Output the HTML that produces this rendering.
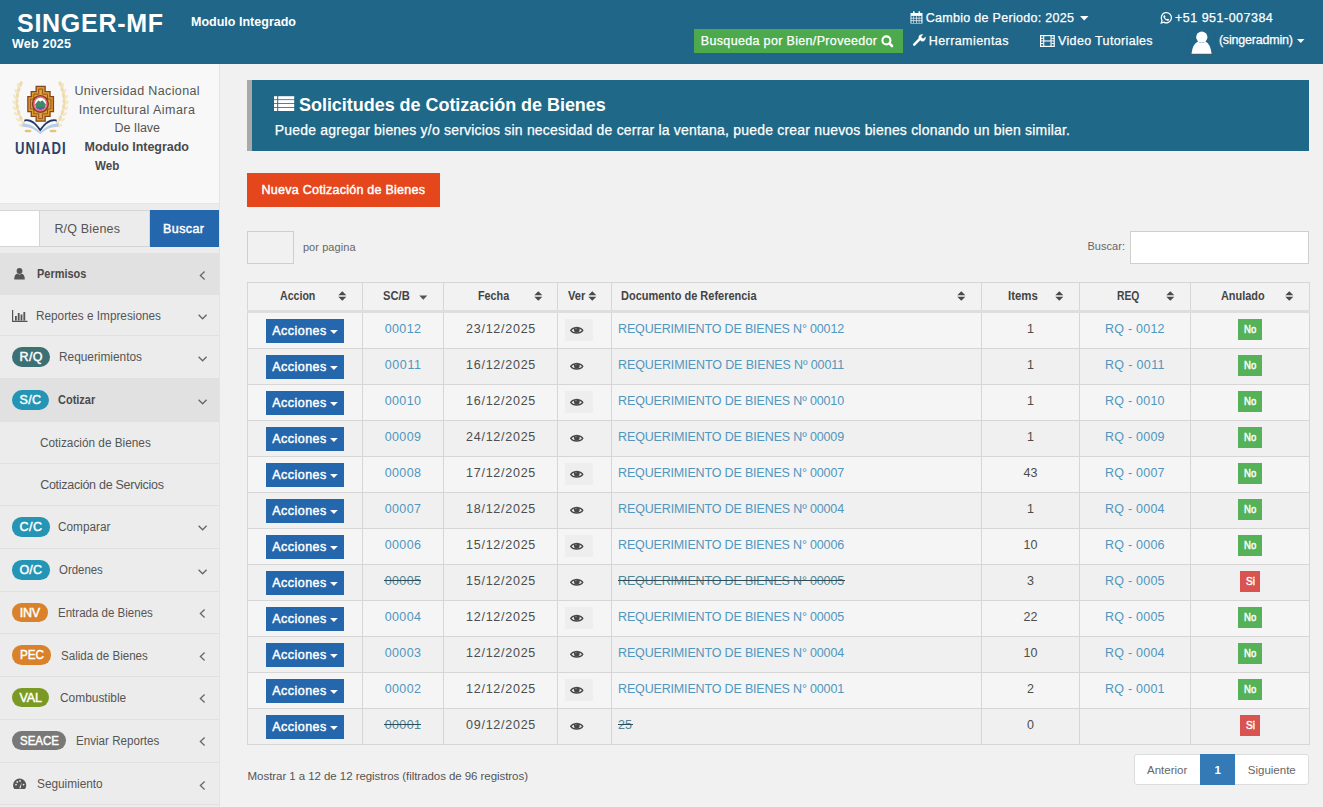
<!DOCTYPE html>
<html><head><meta charset="utf-8">
<style>
*{box-sizing:border-box;margin:0;padding:0}
html,body{width:1323px;height:807px;overflow:hidden;background:#f1f1f1}
body{font-family:"Liberation Sans",sans-serif;position:relative}
.a{position:absolute;white-space:nowrap}
.a.r{-webkit-text-stroke:0.25px currentColor}
svg{position:absolute;overflow:visible}
</style></head><body>
<div class="a" style="left:0px;top:0px;width:1323px;height:64px;background:#1f6688;"></div>
<div class="a" style="left:17.00px;top:10.85px;font-size:25px;line-height:25px;color:#fff;font-weight:bold;letter-spacing:0.719px;">SINGER-MF</div>
<div class="a" style="left:12.00px;top:37.58px;font-size:12.5px;line-height:12.5px;color:#fff;font-weight:bold;letter-spacing:0.221px;">Web 2025</div>
<div class="a" style="left:191.00px;top:15.98px;font-size:12.5px;line-height:12.5px;color:#fff;font-weight:bold;letter-spacing:0.010px;">Modulo Integrado</div>
<div class="a r" style="left:925.70px;top:11.58px;font-size:12.5px;line-height:12.5px;color:#fff;letter-spacing:0.298px;">Cambio de Periodo: 2025</div>
<svg style="left:1080px;top:16px" width="9" height="5" viewBox="0 0 9 5"><path d="M0 0H8.5L4.25 4.5Z" fill="#fff"/></svg>
<svg style="left:910px;top:11px" width="13" height="13" viewBox="0 0 13 13"><path d="M0.5 2h12v10.5H0.5Z" fill="#fff"/><rect x="3" y="0.3" width="1.6" height="3" fill="#fff"/><rect x="8.5" y="0.3" width="1.6" height="3" fill="#fff"/><rect x="1.4" y="4.9" width="2.1" height="1.9" fill="#1f6688"/><rect x="1.4" y="7.5" width="2.1" height="1.9" fill="#1f6688"/><rect x="1.4" y="10.1" width="2.1" height="1.9" fill="#1f6688"/><rect x="4.0" y="4.9" width="2.1" height="1.9" fill="#1f6688"/><rect x="4.0" y="7.5" width="2.1" height="1.9" fill="#1f6688"/><rect x="4.0" y="10.1" width="2.1" height="1.9" fill="#1f6688"/><rect x="6.7" y="4.9" width="2.1" height="1.9" fill="#1f6688"/><rect x="6.7" y="7.5" width="2.1" height="1.9" fill="#1f6688"/><rect x="6.7" y="10.1" width="2.1" height="1.9" fill="#1f6688"/><rect x="9.3" y="4.9" width="2.1" height="1.9" fill="#1f6688"/><rect x="9.3" y="7.5" width="2.1" height="1.9" fill="#1f6688"/><rect x="9.3" y="10.1" width="2.1" height="1.9" fill="#1f6688"/></svg>
<div class="a r" style="left:1175.00px;top:11.88px;font-size:12.5px;line-height:12.5px;color:#fff;letter-spacing:0.492px;">+51 951-007384</div>
<svg style="left:1160px;top:11.5px" width="12" height="12" viewBox="0 0 12 12"><path d="M1.3 10.9l0.7-2.5A5.1 5.1 0 1 1 3.7 10.1Z" fill="none" stroke="#fff" stroke-width="1.3"/><path d="M3.9 3.4c0.4-0.4 0.8-0.3 1 0.1l0.5 1.1c0.1 0.3-0.3 0.6-0.4 0.8 0.5 0.9 1.1 1.5 2 1.9 0.2-0.2 0.5-0.6 0.8-0.5l1.1 0.5c0.3 0.2 0.3 0.6 0 1-0.6 0.7-1.4 0.7-2.4 0.2-1.3-0.7-2.3-1.7-2.9-3-0.4-0.9-0.3-1.6 0.3-2.1Z" fill="#fff"/></svg>
<div class="a" style="left:694px;top:29px;width:209px;height:24px;background:#4caa4c;"></div>
<div class="a r" style="left:700.80px;top:34.98px;font-size:12.5px;line-height:12.5px;color:#fff;letter-spacing:0.337px;">Busqueda por Bien/Proveedor</div>
<svg style="left:881px;top:35px" width="13" height="13" viewBox="0 0 13 13"><circle cx="5.4" cy="5.4" r="4.0" fill="none" stroke="#fff" stroke-width="2.1"/><path d="M8.4 8.4L11 11" stroke="#fff" stroke-width="2.6" stroke-linecap="round"/></svg>
<svg style="left:912.5px;top:34px" width="13" height="13" viewBox="0 0 13 13"><path d="M1.2 10.6L6.6 5.2" stroke="#fff" stroke-width="2.6" stroke-linecap="round"/><path d="M5.6 4.6A3.6 3.6 0 0 1 10.3 0.4L8.4 2.3 8.8 4.1 10.6 4.5 12.5 2.6A3.6 3.6 0 0 1 8.3 7.3Z" fill="#fff"/></svg>
<div class="a r" style="left:928.70px;top:34.58px;font-size:12.5px;line-height:12.5px;color:#fff;letter-spacing:0.436px;">Herramientas</div>
<svg style="left:1039.5px;top:34.5px" width="15" height="12" viewBox="0 0 15 12"><rect x="0.6" y="0.6" width="13.6" height="10.8" fill="none" stroke="#fff" stroke-width="1.2"/><rect x="3.2" y="0.6" width="1.1" height="10.8" fill="#fff"/><rect x="10.5" y="0.6" width="1.1" height="10.8" fill="#fff"/><rect x="3.2" y="5.4" width="8.4" height="1.1" fill="#fff"/><rect x="0.6" y="2.8" width="2.6" height="1" fill="#fff"/><rect x="0.6" y="5.4" width="2.6" height="1" fill="#fff"/><rect x="0.6" y="8.0" width="2.6" height="1" fill="#fff"/><rect x="11.6" y="2.8" width="2.6" height="1" fill="#fff"/><rect x="11.6" y="5.4" width="2.6" height="1" fill="#fff"/><rect x="11.6" y="8.0" width="2.6" height="1" fill="#fff"/></svg>
<div class="a r" style="left:1058.00px;top:34.58px;font-size:12.5px;line-height:12.5px;color:#fff;letter-spacing:0.347px;">Video Tutoriales</div>
<div class="a" style="left:1186.5px;top:26.5px;width:29.0px;height:28.0px;background:#1f6688;border:1px solid #2f5f75;"></div>
<svg style="left:1187px;top:27px" width="28" height="27" viewBox="0 0 28 27"><circle cx="14.8" cy="10.2" r="5.6" fill="#fff"/><path d="M11 14.5 Q14.8 17.5 18.6 14.5 Q23.5 17 24.6 26.8 H4.5 Q5.5 17 11 14.5Z" fill="#fff"/></svg>
<div class="a r" style="left:1218.90px;top:33.77px;font-size:12.5px;line-height:12.5px;color:#fff;letter-spacing:-0.192px;">(singeradmin)</div>
<svg style="left:1296.5px;top:38.5px" width="8" height="5" viewBox="0 0 8 5"><path d="M0 0H7.5L3.75 4Z" fill="#fff"/></svg>
<div class="a" style="left:0px;top:64px;width:219px;height:743px;background:#ececec;"></div>
<div class="a" style="left:219px;top:64px;width:1px;height:743px;background:#e3e3e3;"></div>
<div class="a" style="left:0px;top:64px;width:219px;height:139px;background:#f8f8f8;"></div>
<div class="a" style="left:0px;top:203px;width:219px;height:1px;background:#e4e4e4;"></div>
<svg style="left:0;top:0" width="80" height="160" viewBox="0 0 80 160"><ellipse cx="20.69" cy="84.00" rx="1.6" ry="3.0" transform="rotate(25.0 20.69 84.00)" fill="#eedcad"/><ellipse cx="18.09" cy="85.50" rx="1.3" ry="2.6" transform="rotate(-15.0 18.09 85.50)" fill="#f4e7c6"/><ellipse cx="18.71" cy="89.71" rx="1.6" ry="3.0" transform="rotate(17.9 18.71 89.71)" fill="#eedcad"/><ellipse cx="16.11" cy="91.21" rx="1.3" ry="2.6" transform="rotate(-22.1 16.11 91.21)" fill="#f4e7c6"/><ellipse cx="17.39" cy="95.43" rx="1.6" ry="3.0" transform="rotate(10.7 17.39 95.43)" fill="#eedcad"/><ellipse cx="14.79" cy="96.93" rx="1.3" ry="2.6" transform="rotate(-29.3 14.79 96.93)" fill="#f4e7c6"/><ellipse cx="16.90" cy="101.14" rx="1.6" ry="3.0" transform="rotate(3.6 16.90 101.14)" fill="#eedcad"/><ellipse cx="14.30" cy="102.64" rx="1.3" ry="2.6" transform="rotate(-36.4 14.30 102.64)" fill="#f4e7c6"/><ellipse cx="17.33" cy="106.86" rx="1.6" ry="3.0" transform="rotate(-3.6 17.33 106.86)" fill="#eedcad"/><ellipse cx="14.73" cy="108.36" rx="1.3" ry="2.6" transform="rotate(-43.6 14.73 108.36)" fill="#f4e7c6"/><ellipse cx="18.68" cy="112.57" rx="1.6" ry="3.0" transform="rotate(-10.7 18.68 112.57)" fill="#eedcad"/><ellipse cx="16.08" cy="114.07" rx="1.3" ry="2.6" transform="rotate(-50.7 16.08 114.07)" fill="#f4e7c6"/><ellipse cx="20.85" cy="118.29" rx="1.6" ry="3.0" transform="rotate(-17.9 20.85 118.29)" fill="#eedcad"/><ellipse cx="18.25" cy="119.79" rx="1.3" ry="2.6" transform="rotate(-57.9 18.25 119.79)" fill="#f4e7c6"/><ellipse cx="23.69" cy="124.00" rx="1.6" ry="3.0" transform="rotate(-25.0 23.69 124.00)" fill="#eedcad"/><ellipse cx="21.09" cy="125.50" rx="1.3" ry="2.6" transform="rotate(-65.0 21.09 125.50)" fill="#f4e7c6"/><ellipse cx="60.31" cy="84.00" rx="1.6" ry="3.0" transform="rotate(-25.0 60.31 84.00)" fill="#eedcad"/><ellipse cx="62.91" cy="85.50" rx="1.3" ry="2.6" transform="rotate(15.0 62.91 85.50)" fill="#f4e7c6"/><ellipse cx="62.29" cy="89.71" rx="1.6" ry="3.0" transform="rotate(-17.9 62.29 89.71)" fill="#eedcad"/><ellipse cx="64.89" cy="91.21" rx="1.3" ry="2.6" transform="rotate(22.1 64.89 91.21)" fill="#f4e7c6"/><ellipse cx="63.61" cy="95.43" rx="1.6" ry="3.0" transform="rotate(-10.7 63.61 95.43)" fill="#eedcad"/><ellipse cx="66.21" cy="96.93" rx="1.3" ry="2.6" transform="rotate(29.3 66.21 96.93)" fill="#f4e7c6"/><ellipse cx="64.10" cy="101.14" rx="1.6" ry="3.0" transform="rotate(-3.6 64.10 101.14)" fill="#eedcad"/><ellipse cx="66.70" cy="102.64" rx="1.3" ry="2.6" transform="rotate(36.4 66.70 102.64)" fill="#f4e7c6"/><ellipse cx="63.67" cy="106.86" rx="1.6" ry="3.0" transform="rotate(3.6 63.67 106.86)" fill="#eedcad"/><ellipse cx="66.27" cy="108.36" rx="1.3" ry="2.6" transform="rotate(43.6 66.27 108.36)" fill="#f4e7c6"/><ellipse cx="62.32" cy="112.57" rx="1.6" ry="3.0" transform="rotate(10.7 62.32 112.57)" fill="#eedcad"/><ellipse cx="64.92" cy="114.07" rx="1.3" ry="2.6" transform="rotate(50.7 64.92 114.07)" fill="#f4e7c6"/><ellipse cx="60.15" cy="118.29" rx="1.6" ry="3.0" transform="rotate(17.9 60.15 118.29)" fill="#eedcad"/><ellipse cx="62.75" cy="119.79" rx="1.3" ry="2.6" transform="rotate(57.9 62.75 119.79)" fill="#f4e7c6"/><ellipse cx="57.31" cy="124.00" rx="1.6" ry="3.0" transform="rotate(25.0 57.31 124.00)" fill="#eedcad"/><ellipse cx="59.91" cy="125.50" rx="1.3" ry="2.6" transform="rotate(65.0 59.91 125.50)" fill="#f4e7c6"/><path d="M35.50 85.80 L45.80 85.80 L45.80 91.00 L50.70 91.00 L50.70 95.90 L54.10 95.90 L54.10 112.20 L50.70 112.20 L50.70 117.00 L45.80 117.00 L45.80 121.80 L35.50 121.80 L35.50 117.00 L30.60 117.00 L30.60 112.20 L27.20 112.20 L27.20 95.90 L30.60 95.90 L30.60 91.00 L35.50 91.00Z" fill="#86441e"/><path d="M36.80 87.10 L44.50 87.10 L44.50 92.30 L49.40 92.30 L49.40 97.20 L52.80 97.20 L52.80 110.90 L49.40 110.90 L49.40 115.70 L44.50 115.70 L44.50 120.50 L36.80 120.50 L36.80 115.70 L31.90 115.70 L31.90 110.90 L28.50 110.90 L28.50 97.20 L31.90 97.20 L31.90 92.30 L36.80 92.30Z" fill="#dc9c30"/><path d="M38.70 89.00 L42.60 89.00 L42.60 94.20 L47.50 94.20 L47.50 99.10 L50.90 99.10 L50.90 109.00 L47.50 109.00 L47.50 113.80 L42.60 113.80 L42.60 118.60 L38.70 118.60 L38.70 113.80 L33.80 113.80 L33.80 109.00 L30.40 109.00 L30.40 99.10 L33.80 99.10 L33.80 94.20 L38.70 94.20Z" fill="none" stroke="#9a5424" stroke-width="1"/><path d="M40.10 90.40 L41.20 90.40 L41.20 95.60 L46.10 95.60 L46.10 100.50 L49.50 100.50 L49.50 107.60 L46.10 107.60 L46.10 112.40 L41.20 112.40 L41.20 117.20 L40.10 117.20 L40.10 112.40 L35.20 112.40 L35.20 107.60 L31.80 107.60 L31.80 100.50 L35.20 100.50 L35.20 95.60 L40.10 95.60Z" fill="#e3a63e"/><ellipse cx="40.4" cy="103.9" rx="8.6" ry="9.0" fill="#7e3a22"/><ellipse cx="40.4" cy="103.9" rx="7.2" ry="7.7" fill="#ea7086"/><ellipse cx="40.4" cy="103.9" rx="5.6" ry="6.1" fill="#fff"/><path d="M35 104.5L38.3 100.6 40.3 101.7 42.4 100.2 45.9 104.5A5.6 6.1 0 0 1 35 104.5Z" fill="#3f8a66"/><path d="M35.6 107A5.6 6.1 0 0 0 45.2 107Z" fill="#5960a8"/><path d="M24 121.5Q32 119 40.2 131.8Q48.5 119 57 121.5L56.5 119.5Q48 117.5 40.2 128.5Q32.5 117.5 24.5 119.5Z" fill="#1f3a68"/><path d="M22 124Q31 122 40.2 132.5Q49.5 122 59 124L58 127Q49 126 40.2 134Q31.5 126 23 127Z" fill="#b9cde6"/><ellipse cx="28" cy="131" rx="3.5" ry="1.3" fill="#e5c278"/><ellipse cx="53" cy="131" rx="3.5" ry="1.3" fill="#e5c278"/></svg>
<div class="a" style="left:14.50px;top:140.60px;font-size:16px;line-height:16px;color:#2b4266;font-weight:bold;letter-spacing:1.346px;transform:scaleX(0.82);transform-origin:0 0;">UNIADI</div>
<div class="a" style="left:74.40px;top:84.77px;font-size:12.5px;line-height:12.5px;color:#555;letter-spacing:0.374px;">Universidad Nacional</div>
<div class="a" style="left:78.70px;top:103.77px;font-size:12.5px;line-height:12.5px;color:#555;letter-spacing:0.450px;">Intercultural Aimara</div>
<div class="a" style="left:114.40px;top:122.47px;font-size:12.5px;line-height:12.5px;color:#555;letter-spacing:-0.036px;">De Ilave</div>
<div class="a" style="left:84.50px;top:140.97px;font-size:12.5px;line-height:12.5px;color:#4a4a4a;font-weight:bold;letter-spacing:-0.023px;">Modulo Integrado</div>
<div class="a" style="left:94.70px;top:159.97px;font-size:12.5px;line-height:12.5px;color:#4a4a4a;font-weight:bold;transform:scaleX(0.9293);transform-origin:0.00px 0;">Web</div>
<div class="a" style="left:0px;top:210px;width:40px;height:36.5px;background:#fff;border:1px solid #d5d5d5;border-left:none;"></div>
<div class="a" style="left:39px;top:210px;width:111px;height:36.5px;background:#ececec;border:1px solid #d5d5d5;"></div>
<div class="a" style="left:54.40px;top:222.78px;font-size:12.5px;line-height:12.5px;color:#555;letter-spacing:0.189px;">R/Q Bienes</div>
<div class="a" style="left:150px;top:210px;width:69px;height:36.5px;background:#2467ad;"></div>
<div class="a r" style="left:163.00px;top:222.78px;font-size:12.5px;line-height:12.5px;color:#fff;letter-spacing:0.420px;-webkit-text-stroke:0.45px #fff;">Buscar</div>
<div class="a" style="left:0px;top:252.8px;width:219px;height:42.19999999999999px;background:#e1e1e1;"></div>
<div class="a" style="left:0px;top:378px;width:219px;height:43.60000000000002px;background:#e1e1e1;"></div>
<div class="a" style="left:0px;top:335px;width:219px;height:1px;background:#e0e0e0;"></div>
<div class="a" style="left:0px;top:378px;width:219px;height:1px;background:#e0e0e0;"></div>
<div class="a" style="left:0px;top:463px;width:219px;height:1px;background:#e0e0e0;"></div>
<div class="a" style="left:0px;top:505px;width:219px;height:1px;background:#e0e0e0;"></div>
<div class="a" style="left:0px;top:548px;width:219px;height:1px;background:#e0e0e0;"></div>
<div class="a" style="left:0px;top:591px;width:219px;height:1px;background:#e0e0e0;"></div>
<div class="a" style="left:0px;top:633px;width:219px;height:1px;background:#e0e0e0;"></div>
<div class="a" style="left:0px;top:676px;width:219px;height:1px;background:#e0e0e0;"></div>
<div class="a" style="left:0px;top:719px;width:219px;height:1px;background:#e0e0e0;"></div>
<div class="a" style="left:0px;top:762px;width:219px;height:1px;background:#e0e0e0;"></div>
<div class="a" style="left:0px;top:804px;width:219px;height:1px;background:#e0e0e0;"></div>
<svg style="left:14px;top:267.5px" width="11" height="12" viewBox="0 0 11 12"><circle cx="5.5" cy="3" r="2.9" fill="#555"/><path d="M0.2 11.5Q0.2 6.3 3.3 5.8Q5.5 7.3 7.7 5.8Q10.8 6.3 10.8 11.5Z" fill="#555"/></svg>
<div class="a" style="left:36.60px;top:267.98px;font-size:12.5px;line-height:12.5px;color:#4a4a4a;font-weight:bold;transform:scaleX(0.8757);transform-origin:0.00px 0;">Permisos</div>
<svg style="left:199px;top:271px" width="7" height="9" viewBox="0 0 7 9"><path d="M5.6 0.6L1.4 4.5 5.6 8.4" fill="none" stroke="#666" stroke-width="1.3"/></svg>
<svg style="left:11.5px;top:309.5px" width="16" height="12" viewBox="0 0 16 12"><path d="M0.6 0V11.4H15.5" fill="none" stroke="#555" stroke-width="1.2"/><rect x="3" y="6" width="1.8" height="4.6" fill="#555"/><rect x="5.8" y="3" width="1.8" height="7.6" fill="#555"/><rect x="8.6" y="4.5" width="1.8" height="6.1" fill="#555"/><rect x="11.4" y="2" width="1.8" height="8.6" fill="#555"/></svg>
<div class="a" style="left:36.40px;top:309.78px;font-size:12.5px;line-height:12.5px;color:#555;transform:scaleX(0.9412);transform-origin:0.00px 0;">Reportes e Impresiones</div>
<svg style="left:197.5px;top:314px" width="10" height="6" viewBox="0 0 10 6"><path d="M0.6 0.8L4.6 4.8 8.6 0.8" fill="none" stroke="#666" stroke-width="1.3"/></svg>
<div class="a" style="left:11.8px;top:346.9px;width:38.2px;height:19.80000000000001px;background:#3b7175;border-radius:9.900000000000006px;"></div>
<div class="a r" style="left:19.50px;top:351.27px;font-size:12.5px;line-height:12.5px;color:#fff;letter-spacing:0.400px;-webkit-text-stroke:0.45px #fff;">R/Q</div>
<div class="a" style="left:59.30px;top:351.48px;font-size:12.5px;line-height:12.5px;color:#555;transform:scaleX(0.9480);transform-origin:0.00px 0;">Requerimientos</div>
<svg style="left:197.5px;top:356px" width="10" height="6" viewBox="0 0 10 6"><path d="M0.6 0.8L4.6 4.8 8.6 0.8" fill="none" stroke="#666" stroke-width="1.3"/></svg>
<div class="a" style="left:11.8px;top:389.8px;width:36.8px;height:19.899999999999977px;background:#2495b5;border-radius:9.949999999999989px;"></div>
<div class="a r" style="left:19.50px;top:394.23px;font-size:12.5px;line-height:12.5px;color:#fff;letter-spacing:0.325px;-webkit-text-stroke:0.45px #fff;">S/C</div>
<div class="a" style="left:57.80px;top:394.48px;font-size:12.5px;line-height:12.5px;color:#4a4a4a;font-weight:bold;transform:scaleX(0.8784);transform-origin:0.00px 0;">Cotizar</div>
<svg style="left:197.5px;top:399px" width="10" height="6" viewBox="0 0 10 6"><path d="M0.6 0.8L4.6 4.8 8.6 0.8" fill="none" stroke="#666" stroke-width="1.3"/></svg>
<div class="a" style="left:40.20px;top:436.98px;font-size:12.5px;line-height:12.5px;color:#555;transform:scaleX(0.9434);transform-origin:0.00px 0;">Cotizaci&oacute;n de Bienes</div>
<div class="a" style="left:40.20px;top:479.28px;font-size:12.5px;line-height:12.5px;color:#555;letter-spacing:-0.277px;">Cotizaci&oacute;n de Servicios</div>
<div class="a" style="left:12px;top:517.4px;width:37.5px;height:19.200000000000045px;background:#2495b5;border-radius:9.600000000000023px;"></div>
<div class="a r" style="left:19.50px;top:521.48px;font-size:12.5px;line-height:12.5px;color:#fff;letter-spacing:0.475px;-webkit-text-stroke:0.45px #fff;">C/C</div>
<div class="a" style="left:58.10px;top:520.88px;font-size:12.5px;line-height:12.5px;color:#555;transform:scaleX(0.9433);transform-origin:0.00px 0;">Comparar</div>
<svg style="left:197.5px;top:525px" width="10" height="6" viewBox="0 0 10 6"><path d="M0.6 0.8L4.6 4.8 8.6 0.8" fill="none" stroke="#666" stroke-width="1.3"/></svg>
<div class="a" style="left:12px;top:560px;width:37.9px;height:19.600000000000023px;background:#2495b5;border-radius:9.800000000000011px;"></div>
<div class="a r" style="left:19.60px;top:564.27px;font-size:12.5px;line-height:12.5px;color:#fff;letter-spacing:0.050px;-webkit-text-stroke:0.45px #fff;">O/C</div>
<div class="a" style="left:58.50px;top:564.38px;font-size:12.5px;line-height:12.5px;color:#555;transform:scaleX(0.9135);transform-origin:0.00px 0;">Ordenes</div>
<svg style="left:197.5px;top:568.5px" width="10" height="6" viewBox="0 0 10 6"><path d="M0.6 0.8L4.6 4.8 8.6 0.8" fill="none" stroke="#666" stroke-width="1.3"/></svg>
<div class="a" style="left:12.2px;top:603.2px;width:35.7px;height:18.399999999999977px;background:#d9822b;border-radius:9.199999999999989px;"></div>
<div class="a r" style="left:19.70px;top:606.88px;font-size:12.5px;line-height:12.5px;color:#fff;letter-spacing:-0.225px;-webkit-text-stroke:0.45px #fff;">INV</div>
<div class="a" style="left:57.70px;top:606.98px;font-size:12.5px;line-height:12.5px;color:#555;transform:scaleX(0.9217);transform-origin:0.00px 0;">Entrada de Bienes</div>
<svg style="left:199px;top:609px" width="7" height="9" viewBox="0 0 7 9"><path d="M5.6 0.6L1.4 4.5 5.6 8.4" fill="none" stroke="#666" stroke-width="1.3"/></svg>
<div class="a" style="left:12.2px;top:645px;width:38.8px;height:19.5px;background:#d9822b;border-radius:9.75px;"></div>
<div class="a r" style="left:19.50px;top:649.23px;font-size:12.5px;line-height:12.5px;color:#fff;transform:scaleX(0.9339);transform-origin:0.00px 0;-webkit-text-stroke:0.45px #fff;">PEC</div>
<div class="a" style="left:60.60px;top:649.98px;font-size:12.5px;line-height:12.5px;color:#555;transform:scaleX(0.9254);transform-origin:0.00px 0;">Salida de Bienes</div>
<svg style="left:199px;top:652px" width="7" height="9" viewBox="0 0 7 9"><path d="M5.6 0.6L1.4 4.5 5.6 8.4" fill="none" stroke="#666" stroke-width="1.3"/></svg>
<div class="a" style="left:12.2px;top:688px;width:37.3px;height:19.399999999999977px;background:#7a9a23;border-radius:9.699999999999989px;"></div>
<div class="a r" style="left:19.50px;top:692.18px;font-size:12.5px;line-height:12.5px;color:#fff;letter-spacing:-0.100px;-webkit-text-stroke:0.45px #fff;">VAL</div>
<div class="a" style="left:59.80px;top:692.27px;font-size:12.5px;line-height:12.5px;color:#555;transform:scaleX(0.9525);transform-origin:0.00px 0;">Combustible</div>
<svg style="left:199px;top:694px" width="7" height="9" viewBox="0 0 7 9"><path d="M5.6 0.6L1.4 4.5 5.6 8.4" fill="none" stroke="#666" stroke-width="1.3"/></svg>
<div class="a" style="left:12.2px;top:730.9px;width:53.5px;height:19.399999999999977px;background:#787878;border-radius:9.699999999999989px;"></div>
<div class="a r" style="left:19.50px;top:735.07px;font-size:12.5px;line-height:12.5px;color:#fff;transform:scaleX(0.9198);transform-origin:0.00px 0;-webkit-text-stroke:0.45px #fff;">SEACE</div>
<div class="a" style="left:75.50px;top:735.18px;font-size:12.5px;line-height:12.5px;color:#555;transform:scaleX(0.9286);transform-origin:0.00px 0;">Enviar Reportes</div>
<svg style="left:199px;top:737px" width="7" height="9" viewBox="0 0 7 9"><path d="M5.6 0.6L1.4 4.5 5.6 8.4" fill="none" stroke="#666" stroke-width="1.3"/></svg>
<svg style="left:12.5px;top:779px" width="14" height="10" viewBox="0 0 14 10"><path d="M1.3 10A6.6 6.6 0 1 1 12.0 10Z" fill="#555"/><path d="M6.3 9.2L8.6 3.2 7.7 9.2Z" fill="#ececec"/><circle cx="3" cy="5.6" r="0.9" fill="#ececec"/><circle cx="4.3" cy="2.9" r="0.9" fill="#ececec"/><circle cx="10.6" cy="5.6" r="0.9" fill="#ececec"/><circle cx="7" cy="1.9" r="0.9" fill="#ececec"/></svg>
<div class="a" style="left:36.60px;top:778.27px;font-size:12.5px;line-height:12.5px;color:#555;transform:scaleX(0.9453);transform-origin:0.00px 0;">Seguimiento</div>
<svg style="left:199px;top:781px" width="7" height="9" viewBox="0 0 7 9"><path d="M5.6 0.6L1.4 4.5 5.6 8.4" fill="none" stroke="#666" stroke-width="1.3"/></svg>
<div class="a" style="left:220px;top:64px;width:1103px;height:743px;background:#f1f1f1;"></div>
<div class="a" style="left:247px;top:80px;width:1062px;height:70.6px;background:#1f6888;"></div>
<div class="a" style="left:247px;top:80px;width:5px;height:70.6px;background:#a9a9a9;"></div>
<svg style="left:274px;top:96px" width="21" height="16" viewBox="0 0 21 16"><rect x="0" y="0.2" width="3.2" height="3.1" fill="#fff"/><rect x="4.2" y="0.2" width="16" height="3.1" fill="#fff"/><rect x="0" y="4.1" width="3.2" height="3.1" fill="#fff"/><rect x="4.2" y="4.1" width="16" height="3.1" fill="#fff"/><rect x="0" y="8.0" width="3.2" height="3.1" fill="#fff"/><rect x="4.2" y="8.0" width="16" height="3.1" fill="#fff"/><rect x="0" y="11.9" width="3.2" height="3.1" fill="#fff"/><rect x="4.2" y="11.9" width="16" height="3.1" fill="#fff"/></svg>
<div class="a" style="left:299.00px;top:96.00px;font-size:18px;line-height:18px;color:#fff;font-weight:bold;letter-spacing:-0.037px;">Solicitudes de Cotizaci&oacute;n de Bienes</div>
<div class="a r" style="left:274.80px;top:122.70px;font-size:14px;line-height:14px;color:#fff;letter-spacing:0.198px;">Puede agregar bienes y/o servicios sin necesidad de cerrar la ventana, puede crear nuevos bienes clonando un bien similar.</div>
<div class="a" style="left:247px;top:173px;width:193px;height:33.599999999999994px;background:#e5461b;"></div>
<div class="a r" style="left:261.60px;top:184.07px;font-size:12.5px;line-height:12.5px;color:#fff;letter-spacing:0.254px;-webkit-text-stroke:0.45px #fff;">Nueva Cotizaci&oacute;n de Bienes</div>
<div class="a" style="left:247px;top:231.2px;width:47px;height:32.60000000000002px;background:transparent;border:1px solid #cfcfcf;"></div>
<div class="a" style="left:302.90px;top:241.85px;font-size:11px;line-height:11px;color:#666;letter-spacing:0.078px;">por pagina</div>
<div class="a" style="left:1087.50px;top:240.95px;font-size:11px;line-height:11px;color:#666;letter-spacing:0.033px;">Buscar:</div>
<div class="a" style="left:1130px;top:231.2px;width:179px;height:32.60000000000002px;background:#fff;border:1px solid #cfcfcf;"></div>
<div class="a" style="left:247.5px;top:282.3px;width:1062.0px;height:27.899999999999977px;background:#f2f2f2;"></div>
<div class="a" style="left:247.5px;top:312.5px;width:1062.0px;height:36.0px;background:#f5f5f5;"></div>
<div class="a" style="left:266px;top:319px;width:78px;height:24px;background:#2467ad;"></div>
<div class="a r" style="left:272.30px;top:325.08px;font-size:12.5px;line-height:12.5px;color:#fff;letter-spacing:0.457px;-webkit-text-stroke:0.45px #fff;">Acciones</div>
<svg style="left:330px;top:330px" width="8" height="5" viewBox="0 0 8 5"><path d="M0 0H7.8L3.9 4Z" fill="#fff"/></svg>
<div class="a" style="left:384.70px;top:323.18px;font-size:12.5px;line-height:12.5px;color:#5096bd;letter-spacing:0.388px;">00012</div>
<div class="a" style="left:466.00px;top:323.18px;font-size:12.5px;line-height:12.5px;color:#4d4d4d;letter-spacing:0.750px;">23/12/2025</div>
<div class="a" style="left:565px;top:319.2px;width:27.5px;height:21.80000000000001px;background:#eeeeee;"></div>
<svg style="left:570.3px;top:326.3px" width="14" height="9" viewBox="0 0 14 9"><path d="M0.8 4.4C2.8 0.9 10.7 0.9 12.7 4.4C10.7 7.9 2.8 7.9 0.8 4.4Z" fill="none" stroke="#484848" stroke-width="1.5"/><circle cx="6.8" cy="3.6" r="2.9" fill="#484848"/><circle cx="5.9" cy="2.6" r="0.8" fill="#888"/></svg>
<div class="a" style="left:618.10px;top:323.18px;font-size:12.5px;line-height:12.5px;color:#5096bd;letter-spacing:-0.168px;">REQUERIMIENTO DE BIENES N&deg; 00012</div>
<div class="a" style="left:1027.03px;top:323.18px;font-size:12.5px;line-height:12.5px;color:#4d4d4d;">1</div>
<div class="a" style="left:1105.00px;top:323.18px;font-size:12.5px;line-height:12.5px;color:#5096bd;letter-spacing:0.231px;">RQ - 0012</div>
<div class="a" style="left:1238px;top:319px;width:24px;height:20.69999999999999px;background:#55b259;"></div>
<div class="a r" style="left:1243.80px;top:324.05px;font-size:11px;line-height:11px;color:#fff;transform:scaleX(0.8683);transform-origin:0.00px 0;-webkit-text-stroke:0.45px #fff;">No</div>
<div class="a" style="left:247.5px;top:348.5px;width:1062.0px;height:36.0px;background:#f0f0f0;"></div>
<div class="a" style="left:266px;top:355px;width:78px;height:24px;background:#2467ad;"></div>
<div class="a r" style="left:272.30px;top:361.08px;font-size:12.5px;line-height:12.5px;color:#fff;letter-spacing:0.457px;-webkit-text-stroke:0.45px #fff;">Acciones</div>
<svg style="left:330px;top:366px" width="8" height="5" viewBox="0 0 8 5"><path d="M0 0H7.8L3.9 4Z" fill="#fff"/></svg>
<div class="a" style="left:384.70px;top:359.18px;font-size:12.5px;line-height:12.5px;color:#5096bd;letter-spacing:0.613px;">00011</div>
<div class="a" style="left:466.00px;top:359.18px;font-size:12.5px;line-height:12.5px;color:#4d4d4d;letter-spacing:0.750px;">16/12/2025</div>
<svg style="left:570.3px;top:362.3px" width="14" height="9" viewBox="0 0 14 9"><path d="M0.8 4.4C2.8 0.9 10.7 0.9 12.7 4.4C10.7 7.9 2.8 7.9 0.8 4.4Z" fill="none" stroke="#484848" stroke-width="1.5"/><circle cx="6.8" cy="3.6" r="2.9" fill="#484848"/><circle cx="5.9" cy="2.6" r="0.8" fill="#888"/></svg>
<div class="a" style="left:618.10px;top:359.18px;font-size:12.5px;line-height:12.5px;color:#5096bd;letter-spacing:-0.124px;">REQUERIMIENTO DE BIENES N&ordm; 00011</div>
<div class="a" style="left:1027.03px;top:359.18px;font-size:12.5px;line-height:12.5px;color:#4d4d4d;">1</div>
<div class="a" style="left:1105.00px;top:359.18px;font-size:12.5px;line-height:12.5px;color:#5096bd;letter-spacing:0.344px;">RQ - 0011</div>
<div class="a" style="left:1238px;top:355px;width:24px;height:20.69999999999999px;background:#55b259;"></div>
<div class="a r" style="left:1243.80px;top:360.05px;font-size:11px;line-height:11px;color:#fff;transform:scaleX(0.8683);transform-origin:0.00px 0;-webkit-text-stroke:0.45px #fff;">No</div>
<div class="a" style="left:247.5px;top:384.5px;width:1062.0px;height:36.0px;background:#f5f5f5;"></div>
<div class="a" style="left:266px;top:391px;width:78px;height:24px;background:#2467ad;"></div>
<div class="a r" style="left:272.30px;top:397.08px;font-size:12.5px;line-height:12.5px;color:#fff;letter-spacing:0.457px;-webkit-text-stroke:0.45px #fff;">Acciones</div>
<svg style="left:330px;top:402px" width="8" height="5" viewBox="0 0 8 5"><path d="M0 0H7.8L3.9 4Z" fill="#fff"/></svg>
<div class="a" style="left:384.70px;top:395.18px;font-size:12.5px;line-height:12.5px;color:#5096bd;letter-spacing:0.388px;">00010</div>
<div class="a" style="left:466.00px;top:395.18px;font-size:12.5px;line-height:12.5px;color:#4d4d4d;letter-spacing:0.750px;">16/12/2025</div>
<div class="a" style="left:565px;top:391.2px;width:27.5px;height:21.80000000000001px;background:#eeeeee;"></div>
<svg style="left:570.3px;top:398.3px" width="14" height="9" viewBox="0 0 14 9"><path d="M0.8 4.4C2.8 0.9 10.7 0.9 12.7 4.4C10.7 7.9 2.8 7.9 0.8 4.4Z" fill="none" stroke="#484848" stroke-width="1.5"/><circle cx="6.8" cy="3.6" r="2.9" fill="#484848"/><circle cx="5.9" cy="2.6" r="0.8" fill="#888"/></svg>
<div class="a" style="left:618.10px;top:395.18px;font-size:12.5px;line-height:12.5px;color:#5096bd;letter-spacing:-0.155px;">REQUERIMIENTO DE BIENES N&ordm; 00010</div>
<div class="a" style="left:1027.03px;top:395.18px;font-size:12.5px;line-height:12.5px;color:#4d4d4d;">1</div>
<div class="a" style="left:1105.00px;top:395.18px;font-size:12.5px;line-height:12.5px;color:#5096bd;letter-spacing:0.231px;">RQ - 0010</div>
<div class="a" style="left:1238px;top:391px;width:24px;height:20.69999999999999px;background:#55b259;"></div>
<div class="a r" style="left:1243.80px;top:396.05px;font-size:11px;line-height:11px;color:#fff;transform:scaleX(0.8683);transform-origin:0.00px 0;-webkit-text-stroke:0.45px #fff;">No</div>
<div class="a" style="left:247.5px;top:420.5px;width:1062.0px;height:36.0px;background:#f0f0f0;"></div>
<div class="a" style="left:266px;top:427px;width:78px;height:24px;background:#2467ad;"></div>
<div class="a r" style="left:272.30px;top:433.08px;font-size:12.5px;line-height:12.5px;color:#fff;letter-spacing:0.457px;-webkit-text-stroke:0.45px #fff;">Acciones</div>
<svg style="left:330px;top:438px" width="8" height="5" viewBox="0 0 8 5"><path d="M0 0H7.8L3.9 4Z" fill="#fff"/></svg>
<div class="a" style="left:384.70px;top:431.18px;font-size:12.5px;line-height:12.5px;color:#5096bd;letter-spacing:0.388px;">00009</div>
<div class="a" style="left:466.00px;top:431.18px;font-size:12.5px;line-height:12.5px;color:#4d4d4d;letter-spacing:0.750px;">24/12/2025</div>
<svg style="left:570.3px;top:434.3px" width="14" height="9" viewBox="0 0 14 9"><path d="M0.8 4.4C2.8 0.9 10.7 0.9 12.7 4.4C10.7 7.9 2.8 7.9 0.8 4.4Z" fill="none" stroke="#484848" stroke-width="1.5"/><circle cx="6.8" cy="3.6" r="2.9" fill="#484848"/><circle cx="5.9" cy="2.6" r="0.8" fill="#888"/></svg>
<div class="a" style="left:618.10px;top:431.18px;font-size:12.5px;line-height:12.5px;color:#5096bd;letter-spacing:-0.155px;">REQUERIMIENTO DE BIENES N&ordm; 00009</div>
<div class="a" style="left:1027.03px;top:431.18px;font-size:12.5px;line-height:12.5px;color:#4d4d4d;">1</div>
<div class="a" style="left:1105.00px;top:431.18px;font-size:12.5px;line-height:12.5px;color:#5096bd;letter-spacing:0.231px;">RQ - 0009</div>
<div class="a" style="left:1238px;top:427px;width:24px;height:20.69999999999999px;background:#55b259;"></div>
<div class="a r" style="left:1243.80px;top:432.05px;font-size:11px;line-height:11px;color:#fff;transform:scaleX(0.8683);transform-origin:0.00px 0;-webkit-text-stroke:0.45px #fff;">No</div>
<div class="a" style="left:247.5px;top:456.5px;width:1062.0px;height:36.0px;background:#f5f5f5;"></div>
<div class="a" style="left:266px;top:463px;width:78px;height:24px;background:#2467ad;"></div>
<div class="a r" style="left:272.30px;top:469.08px;font-size:12.5px;line-height:12.5px;color:#fff;letter-spacing:0.457px;-webkit-text-stroke:0.45px #fff;">Acciones</div>
<svg style="left:330px;top:474px" width="8" height="5" viewBox="0 0 8 5"><path d="M0 0H7.8L3.9 4Z" fill="#fff"/></svg>
<div class="a" style="left:384.70px;top:467.18px;font-size:12.5px;line-height:12.5px;color:#5096bd;letter-spacing:0.388px;">00008</div>
<div class="a" style="left:466.00px;top:467.18px;font-size:12.5px;line-height:12.5px;color:#4d4d4d;letter-spacing:0.750px;">17/12/2025</div>
<div class="a" style="left:565px;top:463.2px;width:27.5px;height:21.80000000000001px;background:#eeeeee;"></div>
<svg style="left:570.3px;top:470.3px" width="14" height="9" viewBox="0 0 14 9"><path d="M0.8 4.4C2.8 0.9 10.7 0.9 12.7 4.4C10.7 7.9 2.8 7.9 0.8 4.4Z" fill="none" stroke="#484848" stroke-width="1.5"/><circle cx="6.8" cy="3.6" r="2.9" fill="#484848"/><circle cx="5.9" cy="2.6" r="0.8" fill="#888"/></svg>
<div class="a" style="left:618.10px;top:467.18px;font-size:12.5px;line-height:12.5px;color:#5096bd;letter-spacing:-0.168px;">REQUERIMIENTO DE BIENES N&deg; 00007</div>
<div class="a" style="left:1023.55px;top:467.18px;font-size:12.5px;line-height:12.5px;color:#4d4d4d;">43</div>
<div class="a" style="left:1105.00px;top:467.18px;font-size:12.5px;line-height:12.5px;color:#5096bd;letter-spacing:0.231px;">RQ - 0007</div>
<div class="a" style="left:1238px;top:463px;width:24px;height:20.69999999999999px;background:#55b259;"></div>
<div class="a r" style="left:1243.80px;top:468.05px;font-size:11px;line-height:11px;color:#fff;transform:scaleX(0.8683);transform-origin:0.00px 0;-webkit-text-stroke:0.45px #fff;">No</div>
<div class="a" style="left:247.5px;top:492.5px;width:1062.0px;height:36.0px;background:#f0f0f0;"></div>
<div class="a" style="left:266px;top:499px;width:78px;height:24px;background:#2467ad;"></div>
<div class="a r" style="left:272.30px;top:505.08px;font-size:12.5px;line-height:12.5px;color:#fff;letter-spacing:0.457px;-webkit-text-stroke:0.45px #fff;">Acciones</div>
<svg style="left:330px;top:510px" width="8" height="5" viewBox="0 0 8 5"><path d="M0 0H7.8L3.9 4Z" fill="#fff"/></svg>
<div class="a" style="left:384.70px;top:503.18px;font-size:12.5px;line-height:12.5px;color:#5096bd;letter-spacing:0.388px;">00007</div>
<div class="a" style="left:466.00px;top:503.18px;font-size:12.5px;line-height:12.5px;color:#4d4d4d;letter-spacing:0.750px;">18/12/2025</div>
<svg style="left:570.3px;top:506.3px" width="14" height="9" viewBox="0 0 14 9"><path d="M0.8 4.4C2.8 0.9 10.7 0.9 12.7 4.4C10.7 7.9 2.8 7.9 0.8 4.4Z" fill="none" stroke="#484848" stroke-width="1.5"/><circle cx="6.8" cy="3.6" r="2.9" fill="#484848"/><circle cx="5.9" cy="2.6" r="0.8" fill="#888"/></svg>
<div class="a" style="left:618.10px;top:503.18px;font-size:12.5px;line-height:12.5px;color:#5096bd;letter-spacing:-0.155px;">REQUERIMIENTO DE BIENES N&ordm; 00004</div>
<div class="a" style="left:1027.03px;top:503.18px;font-size:12.5px;line-height:12.5px;color:#4d4d4d;">1</div>
<div class="a" style="left:1105.00px;top:503.18px;font-size:12.5px;line-height:12.5px;color:#5096bd;letter-spacing:0.231px;">RQ - 0004</div>
<div class="a" style="left:1238px;top:499px;width:24px;height:20.700000000000045px;background:#55b259;"></div>
<div class="a r" style="left:1243.80px;top:504.05px;font-size:11px;line-height:11px;color:#fff;transform:scaleX(0.8683);transform-origin:0.00px 0;-webkit-text-stroke:0.45px #fff;">No</div>
<div class="a" style="left:247.5px;top:528.5px;width:1062.0px;height:36.0px;background:#f5f5f5;"></div>
<div class="a" style="left:266px;top:535px;width:78px;height:24px;background:#2467ad;"></div>
<div class="a r" style="left:272.30px;top:541.08px;font-size:12.5px;line-height:12.5px;color:#fff;letter-spacing:0.457px;-webkit-text-stroke:0.45px #fff;">Acciones</div>
<svg style="left:330px;top:546px" width="8" height="5" viewBox="0 0 8 5"><path d="M0 0H7.8L3.9 4Z" fill="#fff"/></svg>
<div class="a" style="left:384.70px;top:539.18px;font-size:12.5px;line-height:12.5px;color:#5096bd;letter-spacing:0.388px;">00006</div>
<div class="a" style="left:466.00px;top:539.18px;font-size:12.5px;line-height:12.5px;color:#4d4d4d;letter-spacing:0.750px;">15/12/2025</div>
<div class="a" style="left:565px;top:535.2px;width:27.5px;height:21.799999999999955px;background:#eeeeee;"></div>
<svg style="left:570.3px;top:542.3px" width="14" height="9" viewBox="0 0 14 9"><path d="M0.8 4.4C2.8 0.9 10.7 0.9 12.7 4.4C10.7 7.9 2.8 7.9 0.8 4.4Z" fill="none" stroke="#484848" stroke-width="1.5"/><circle cx="6.8" cy="3.6" r="2.9" fill="#484848"/><circle cx="5.9" cy="2.6" r="0.8" fill="#888"/></svg>
<div class="a" style="left:618.10px;top:539.18px;font-size:12.5px;line-height:12.5px;color:#5096bd;letter-spacing:-0.168px;">REQUERIMIENTO DE BIENES N&deg; 00006</div>
<div class="a" style="left:1023.55px;top:539.18px;font-size:12.5px;line-height:12.5px;color:#4d4d4d;">10</div>
<div class="a" style="left:1105.00px;top:539.18px;font-size:12.5px;line-height:12.5px;color:#5096bd;letter-spacing:0.231px;">RQ - 0006</div>
<div class="a" style="left:1238px;top:535px;width:24px;height:20.700000000000045px;background:#55b259;"></div>
<div class="a r" style="left:1243.80px;top:540.05px;font-size:11px;line-height:11px;color:#fff;transform:scaleX(0.8683);transform-origin:0.00px 0;-webkit-text-stroke:0.45px #fff;">No</div>
<div class="a" style="left:247.5px;top:564.5px;width:1062.0px;height:36.0px;background:#f0f0f0;"></div>
<div class="a" style="left:266px;top:571px;width:78px;height:24px;background:#2467ad;"></div>
<div class="a r" style="left:272.30px;top:577.08px;font-size:12.5px;line-height:12.5px;color:#fff;letter-spacing:0.457px;-webkit-text-stroke:0.45px #fff;">Acciones</div>
<svg style="left:330px;top:582px" width="8" height="5" viewBox="0 0 8 5"><path d="M0 0H7.8L3.9 4Z" fill="#fff"/></svg>
<div class="a" style="left:384.70px;top:575.18px;font-size:12.5px;line-height:12.5px;color:#4e8596;letter-spacing:0.388px;">00005</div>
<div class="a" style="left:383.8px;top:579.7px;width:37.39999999999998px;height:1.2000000000000455px;background:#2f4c57;"></div>
<div class="a" style="left:466.00px;top:575.18px;font-size:12.5px;line-height:12.5px;color:#4d4d4d;letter-spacing:0.750px;">15/12/2025</div>
<svg style="left:570.3px;top:578.3px" width="14" height="9" viewBox="0 0 14 9"><path d="M0.8 4.4C2.8 0.9 10.7 0.9 12.7 4.4C10.7 7.9 2.8 7.9 0.8 4.4Z" fill="none" stroke="#484848" stroke-width="1.5"/><circle cx="6.8" cy="3.6" r="2.9" fill="#484848"/><circle cx="5.9" cy="2.6" r="0.8" fill="#888"/></svg>
<div class="a" style="left:618.10px;top:575.18px;font-size:12.5px;line-height:12.5px;color:#4e8596;letter-spacing:-0.168px;">REQUERIMIENTO DE BIENES N&deg; 00005</div>
<div class="a" style="left:617.5px;top:579.7px;width:227.5px;height:1.2000000000000455px;background:#2f4c57;"></div>
<div class="a" style="left:1027.03px;top:575.18px;font-size:12.5px;line-height:12.5px;color:#4d4d4d;">3</div>
<div class="a" style="left:1105.00px;top:575.18px;font-size:12.5px;line-height:12.5px;color:#5096bd;letter-spacing:0.231px;">RQ - 0005</div>
<div class="a" style="left:1240px;top:571px;width:20px;height:20.700000000000045px;background:#d9534f;"></div>
<div class="a r" style="left:1245.50px;top:576.05px;font-size:11px;line-height:11px;color:#fff;transform:scaleX(0.9184);transform-origin:0.00px 0;-webkit-text-stroke:0.45px #fff;">Si</div>
<div class="a" style="left:247.5px;top:600.5px;width:1062.0px;height:36.0px;background:#f5f5f5;"></div>
<div class="a" style="left:266px;top:607px;width:78px;height:24px;background:#2467ad;"></div>
<div class="a r" style="left:272.30px;top:613.08px;font-size:12.5px;line-height:12.5px;color:#fff;letter-spacing:0.457px;-webkit-text-stroke:0.45px #fff;">Acciones</div>
<svg style="left:330px;top:618px" width="8" height="5" viewBox="0 0 8 5"><path d="M0 0H7.8L3.9 4Z" fill="#fff"/></svg>
<div class="a" style="left:384.70px;top:611.18px;font-size:12.5px;line-height:12.5px;color:#5096bd;letter-spacing:0.388px;">00004</div>
<div class="a" style="left:466.00px;top:611.18px;font-size:12.5px;line-height:12.5px;color:#4d4d4d;letter-spacing:0.750px;">12/12/2025</div>
<div class="a" style="left:565px;top:607.2px;width:27.5px;height:21.799999999999955px;background:#eeeeee;"></div>
<svg style="left:570.3px;top:614.3px" width="14" height="9" viewBox="0 0 14 9"><path d="M0.8 4.4C2.8 0.9 10.7 0.9 12.7 4.4C10.7 7.9 2.8 7.9 0.8 4.4Z" fill="none" stroke="#484848" stroke-width="1.5"/><circle cx="6.8" cy="3.6" r="2.9" fill="#484848"/><circle cx="5.9" cy="2.6" r="0.8" fill="#888"/></svg>
<div class="a" style="left:618.10px;top:611.18px;font-size:12.5px;line-height:12.5px;color:#5096bd;letter-spacing:-0.168px;">REQUERIMIENTO DE BIENES N&deg; 00005</div>
<div class="a" style="left:1023.55px;top:611.18px;font-size:12.5px;line-height:12.5px;color:#4d4d4d;">22</div>
<div class="a" style="left:1105.00px;top:611.18px;font-size:12.5px;line-height:12.5px;color:#5096bd;letter-spacing:0.231px;">RQ - 0005</div>
<div class="a" style="left:1238px;top:607px;width:24px;height:20.700000000000045px;background:#55b259;"></div>
<div class="a r" style="left:1243.80px;top:612.05px;font-size:11px;line-height:11px;color:#fff;transform:scaleX(0.8683);transform-origin:0.00px 0;-webkit-text-stroke:0.45px #fff;">No</div>
<div class="a" style="left:247.5px;top:636.5px;width:1062.0px;height:36.0px;background:#f0f0f0;"></div>
<div class="a" style="left:266px;top:643px;width:78px;height:24px;background:#2467ad;"></div>
<div class="a r" style="left:272.30px;top:649.08px;font-size:12.5px;line-height:12.5px;color:#fff;letter-spacing:0.457px;-webkit-text-stroke:0.45px #fff;">Acciones</div>
<svg style="left:330px;top:654px" width="8" height="5" viewBox="0 0 8 5"><path d="M0 0H7.8L3.9 4Z" fill="#fff"/></svg>
<div class="a" style="left:384.70px;top:647.18px;font-size:12.5px;line-height:12.5px;color:#5096bd;letter-spacing:0.388px;">00003</div>
<div class="a" style="left:466.00px;top:647.18px;font-size:12.5px;line-height:12.5px;color:#4d4d4d;letter-spacing:0.750px;">12/12/2025</div>
<svg style="left:570.3px;top:650.3px" width="14" height="9" viewBox="0 0 14 9"><path d="M0.8 4.4C2.8 0.9 10.7 0.9 12.7 4.4C10.7 7.9 2.8 7.9 0.8 4.4Z" fill="none" stroke="#484848" stroke-width="1.5"/><circle cx="6.8" cy="3.6" r="2.9" fill="#484848"/><circle cx="5.9" cy="2.6" r="0.8" fill="#888"/></svg>
<div class="a" style="left:618.10px;top:647.18px;font-size:12.5px;line-height:12.5px;color:#5096bd;letter-spacing:-0.168px;">REQUERIMIENTO DE BIENES N&deg; 00004</div>
<div class="a" style="left:1023.55px;top:647.18px;font-size:12.5px;line-height:12.5px;color:#4d4d4d;">10</div>
<div class="a" style="left:1105.00px;top:647.18px;font-size:12.5px;line-height:12.5px;color:#5096bd;letter-spacing:0.231px;">RQ - 0004</div>
<div class="a" style="left:1238px;top:643px;width:24px;height:20.700000000000045px;background:#55b259;"></div>
<div class="a r" style="left:1243.80px;top:648.05px;font-size:11px;line-height:11px;color:#fff;transform:scaleX(0.8683);transform-origin:0.00px 0;-webkit-text-stroke:0.45px #fff;">No</div>
<div class="a" style="left:247.5px;top:672.5px;width:1062.0px;height:36.0px;background:#f5f5f5;"></div>
<div class="a" style="left:266px;top:679px;width:78px;height:24px;background:#2467ad;"></div>
<div class="a r" style="left:272.30px;top:685.08px;font-size:12.5px;line-height:12.5px;color:#fff;letter-spacing:0.457px;-webkit-text-stroke:0.45px #fff;">Acciones</div>
<svg style="left:330px;top:690px" width="8" height="5" viewBox="0 0 8 5"><path d="M0 0H7.8L3.9 4Z" fill="#fff"/></svg>
<div class="a" style="left:384.70px;top:683.18px;font-size:12.5px;line-height:12.5px;color:#5096bd;letter-spacing:0.388px;">00002</div>
<div class="a" style="left:466.00px;top:683.18px;font-size:12.5px;line-height:12.5px;color:#4d4d4d;letter-spacing:0.750px;">12/12/2025</div>
<div class="a" style="left:565px;top:679.2px;width:27.5px;height:21.799999999999955px;background:#eeeeee;"></div>
<svg style="left:570.3px;top:686.3px" width="14" height="9" viewBox="0 0 14 9"><path d="M0.8 4.4C2.8 0.9 10.7 0.9 12.7 4.4C10.7 7.9 2.8 7.9 0.8 4.4Z" fill="none" stroke="#484848" stroke-width="1.5"/><circle cx="6.8" cy="3.6" r="2.9" fill="#484848"/><circle cx="5.9" cy="2.6" r="0.8" fill="#888"/></svg>
<div class="a" style="left:618.10px;top:683.18px;font-size:12.5px;line-height:12.5px;color:#5096bd;letter-spacing:-0.168px;">REQUERIMIENTO DE BIENES N&deg; 00001</div>
<div class="a" style="left:1027.03px;top:683.18px;font-size:12.5px;line-height:12.5px;color:#4d4d4d;">2</div>
<div class="a" style="left:1105.00px;top:683.18px;font-size:12.5px;line-height:12.5px;color:#5096bd;letter-spacing:0.231px;">RQ - 0001</div>
<div class="a" style="left:1238px;top:679px;width:24px;height:20.700000000000045px;background:#55b259;"></div>
<div class="a r" style="left:1243.80px;top:684.05px;font-size:11px;line-height:11px;color:#fff;transform:scaleX(0.8683);transform-origin:0.00px 0;-webkit-text-stroke:0.45px #fff;">No</div>
<div class="a" style="left:247.5px;top:708.5px;width:1062.0px;height:36.0px;background:#f0f0f0;"></div>
<div class="a" style="left:266px;top:715px;width:78px;height:24px;background:#2467ad;"></div>
<div class="a r" style="left:272.30px;top:721.08px;font-size:12.5px;line-height:12.5px;color:#fff;letter-spacing:0.457px;-webkit-text-stroke:0.45px #fff;">Acciones</div>
<svg style="left:330px;top:726px" width="8" height="5" viewBox="0 0 8 5"><path d="M0 0H7.8L3.9 4Z" fill="#fff"/></svg>
<div class="a" style="left:384.70px;top:719.18px;font-size:12.5px;line-height:12.5px;color:#4e8596;letter-spacing:0.388px;">00001</div>
<div class="a" style="left:383.8px;top:723.7px;width:37.39999999999998px;height:1.2000000000000455px;background:#2f4c57;"></div>
<div class="a" style="left:466.00px;top:719.18px;font-size:12.5px;line-height:12.5px;color:#4d4d4d;letter-spacing:0.750px;">09/12/2025</div>
<svg style="left:570.3px;top:722.3px" width="14" height="9" viewBox="0 0 14 9"><path d="M0.8 4.4C2.8 0.9 10.7 0.9 12.7 4.4C10.7 7.9 2.8 7.9 0.8 4.4Z" fill="none" stroke="#484848" stroke-width="1.5"/><circle cx="6.8" cy="3.6" r="2.9" fill="#484848"/><circle cx="5.9" cy="2.6" r="0.8" fill="#888"/></svg>
<div class="a" style="left:618.10px;top:719.18px;font-size:12.5px;line-height:12.5px;color:#4e8596;">25</div>
<div class="a" style="left:617.5px;top:723.7px;width:15.5px;height:1.2000000000000455px;background:#2f4c57;"></div>
<div class="a" style="left:1027.03px;top:719.18px;font-size:12.5px;line-height:12.5px;color:#4d4d4d;">0</div>
<div class="a" style="left:1240px;top:715px;width:20px;height:20.700000000000045px;background:#d9534f;"></div>
<div class="a r" style="left:1245.50px;top:720.05px;font-size:11px;line-height:11px;color:#fff;transform:scaleX(0.9184);transform-origin:0.00px 0;-webkit-text-stroke:0.45px #fff;">Si</div>
<div class="a" style="left:247.0px;top:282.3px;width:1.0px;height:461.7px;background:#d6d6d6;"></div>
<div class="a" style="left:362.0px;top:282.3px;width:1.0px;height:461.7px;background:#d6d6d6;"></div>
<div class="a" style="left:443.0px;top:282.3px;width:1.0px;height:461.7px;background:#d6d6d6;"></div>
<div class="a" style="left:557.0px;top:282.3px;width:1.0px;height:461.7px;background:#d6d6d6;"></div>
<div class="a" style="left:611.0px;top:282.3px;width:1.0px;height:461.7px;background:#d6d6d6;"></div>
<div class="a" style="left:981.0px;top:282.3px;width:1.0px;height:461.7px;background:#d6d6d6;"></div>
<div class="a" style="left:1079.0px;top:282.3px;width:1.0px;height:461.7px;background:#d6d6d6;"></div>
<div class="a" style="left:1190.0px;top:282.3px;width:1.0px;height:461.7px;background:#d6d6d6;"></div>
<div class="a" style="left:1309.0px;top:282.3px;width:1.0px;height:461.7px;background:#d6d6d6;"></div>
<div class="a" style="left:247px;top:282px;width:1063px;height:1px;background:#d6d6d6;"></div>
<div class="a" style="left:247px;top:310.2px;width:1063px;height:2.6000000000000227px;background:#dedede;"></div>
<div class="a" style="left:247px;top:348.0px;width:1063px;height:1.0px;background:#d6d6d6;"></div>
<div class="a" style="left:247px;top:384.0px;width:1063px;height:1.0px;background:#d6d6d6;"></div>
<div class="a" style="left:247px;top:420.0px;width:1063px;height:1.0px;background:#d6d6d6;"></div>
<div class="a" style="left:247px;top:456.0px;width:1063px;height:1.0px;background:#d6d6d6;"></div>
<div class="a" style="left:247px;top:492.0px;width:1063px;height:1.0px;background:#d6d6d6;"></div>
<div class="a" style="left:247px;top:528.0px;width:1063px;height:1.0px;background:#d6d6d6;"></div>
<div class="a" style="left:247px;top:564.0px;width:1063px;height:1.0px;background:#d6d6d6;"></div>
<div class="a" style="left:247px;top:600.0px;width:1063px;height:1.0px;background:#d6d6d6;"></div>
<div class="a" style="left:247px;top:636.0px;width:1063px;height:1.0px;background:#d6d6d6;"></div>
<div class="a" style="left:247px;top:672.0px;width:1063px;height:1.0px;background:#d6d6d6;"></div>
<div class="a" style="left:247px;top:708.0px;width:1063px;height:1.0px;background:#d6d6d6;"></div>
<div class="a" style="left:247px;top:744.0px;width:1063px;height:1.0px;background:#d6d6d6;"></div>
<div class="a" style="left:280.00px;top:289.88px;font-size:12.5px;line-height:12.5px;color:#444;font-weight:bold;transform:scaleX(0.8475);transform-origin:0.00px 0;">Accion</div>
<svg style="left:337.5px;top:290.8px" width="9" height="10" viewBox="0 0 9 10"><path d="M0.3 4.3L4.3 0.2 8.3 4.3Z M0.3 5.7L4.3 9.8 8.3 5.7Z" fill="#4a4a4a"/></svg>
<div class="a" style="left:382.60px;top:289.88px;font-size:12.5px;line-height:12.5px;color:#444;font-weight:bold;transform:scaleX(0.8945);transform-origin:0.00px 0;">SC/B</div>
<svg style="left:419px;top:294px" width="9" height="7" viewBox="0 0 9 7"><path d="M0.3 1.5H8.3L4.3 5.8Z" fill="#555"/></svg>
<div class="a" style="left:477.50px;top:289.88px;font-size:12.5px;line-height:12.5px;color:#444;font-weight:bold;transform:scaleX(0.8646);transform-origin:0.00px 0;">Fecha</div>
<svg style="left:533.5px;top:290.8px" width="9" height="10" viewBox="0 0 9 10"><path d="M0.3 4.3L4.3 0.2 8.3 4.3Z M0.3 5.7L4.3 9.8 8.3 5.7Z" fill="#4a4a4a"/></svg>
<div class="a" style="left:567.90px;top:289.88px;font-size:12.5px;line-height:12.5px;color:#444;font-weight:bold;transform:scaleX(0.8946);transform-origin:0.00px 0;">Ver</div>
<svg style="left:587.5px;top:290.8px" width="9" height="10" viewBox="0 0 9 10"><path d="M0.3 4.3L4.3 0.2 8.3 4.3Z M0.3 5.7L4.3 9.8 8.3 5.7Z" fill="#4a4a4a"/></svg>
<div class="a" style="left:621.40px;top:289.88px;font-size:12.5px;line-height:12.5px;color:#444;font-weight:bold;transform:scaleX(0.8788);transform-origin:0.00px 0;">Documento de Referencia</div>
<svg style="left:957px;top:290.8px" width="9" height="10" viewBox="0 0 9 10"><path d="M0.3 4.3L4.3 0.2 8.3 4.3Z M0.3 5.7L4.3 9.8 8.3 5.7Z" fill="#4a4a4a"/></svg>
<div class="a" style="left:1008.00px;top:289.88px;font-size:12.5px;line-height:12.5px;color:#444;font-weight:bold;transform:scaleX(0.9127);transform-origin:0.00px 0;">Items</div>
<svg style="left:1055px;top:290.8px" width="9" height="10" viewBox="0 0 9 10"><path d="M0.3 4.3L4.3 0.2 8.3 4.3Z M0.3 5.7L4.3 9.8 8.3 5.7Z" fill="#4a4a4a"/></svg>
<div class="a" style="left:1116.60px;top:289.88px;font-size:12.5px;line-height:12.5px;color:#444;font-weight:bold;transform:scaleX(0.8266);transform-origin:0.00px 0;">REQ</div>
<svg style="left:1166px;top:290.8px" width="9" height="10" viewBox="0 0 9 10"><path d="M0.3 4.3L4.3 0.2 8.3 4.3Z M0.3 5.7L4.3 9.8 8.3 5.7Z" fill="#4a4a4a"/></svg>
<div class="a" style="left:1221.00px;top:289.88px;font-size:12.5px;line-height:12.5px;color:#444;font-weight:bold;transform:scaleX(0.8720);transform-origin:0.00px 0;">Anulado</div>
<svg style="left:1284.6px;top:290.8px" width="9" height="10" viewBox="0 0 9 10"><path d="M0.3 4.3L4.3 0.2 8.3 4.3Z M0.3 5.7L4.3 9.8 8.3 5.7Z" fill="#4a4a4a"/></svg>
<div class="a" style="left:247.60px;top:770.83px;font-size:11.5px;line-height:11.5px;color:#555;letter-spacing:-0.060px;">Mostrar 1 a 12 de 12 registros (filtrados de 96 registros)</div>
<div class="a" style="left:1133.7px;top:754.3px;width:175.0px;height:30.40000000000009px;background:#fff;border:1px solid #dddddd;border-radius:3px;"></div>
<div class="a" style="left:1199.5px;top:754.3px;width:35.5px;height:30.40000000000009px;background:#337ab7;"></div>
<div class="a" style="left:1147.00px;top:765.03px;font-size:11.5px;line-height:11.5px;color:#666;">Anterior</div>
<div class="a" style="left:1214.50px;top:765.03px;font-size:11.5px;line-height:11.5px;color:#fff;font-weight:bold;">1</div>
<div class="a" style="left:1247.80px;top:765.03px;font-size:11.5px;line-height:11.5px;color:#666;">Siguiente</div>
</body></html>
